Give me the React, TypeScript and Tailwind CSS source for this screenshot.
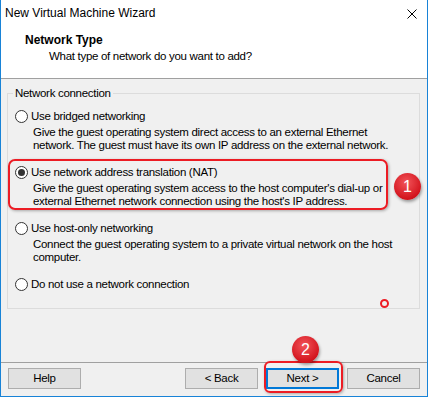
import React from 'react';

interface NetOption {
  id: string;
  label: string;
  desc: string[];
  checked?: boolean;
}

const options: NetOption[] = [
  {
    id: 'bridged',
    label: 'Use bridged networking',
    desc: [
      'Give the guest operating system direct access to an external Ethernet',
      'network. The guest must have its own IP address on the external network.',
    ],
  },
  {
    id: 'nat',
    label: 'Use network address translation (NAT)',
    desc: [
      "Give the guest operating system access to the host computer's dial-up or",
      "external Ethernet network connection using the host's IP address.",
    ],
    checked: true,
  },
  {
    id: 'host',
    label: 'Use host-only networking',
    desc: ['Connect the guest operating system to a private virtual network on the host', 'computer.'],
  },
  { id: 'none', label: 'Do not use a network connection', desc: [] },
];

// body text is a touch narrower than Arial, so squeeze it a little
const body = 'text-[11.5px] tracking-[-0.3px]';

const Radio: React.FC<{ checked?: boolean }> = ({ checked }) => (
  <span className="flex items-center justify-center w-[13px] h-[13px] rounded-full border border-[#333] bg-white shrink-0">
    {checked && <span className="w-[7px] h-[7px] rounded-full bg-[#333]" />}
  </span>
);

const Badge: React.FC<{ n: string; className: string }> = ({ n, className }) => (
  <div
    className={`absolute w-[27px] h-[27px] rounded-full flex items-center justify-center text-white text-[16px] leading-none bg-[radial-gradient(circle_at_45%_35%,#f2545a,#d3141d_70%,#b80f17)] shadow-[1px_2px_3px_rgba(0,0,0,0.35)] ${className}`}
  >
    {n}
  </div>
);

export default function App() {
  return (
    <div className="relative w-[428px] h-[397px] flex flex-col bg-[#f0f0f0] border-x border-b border-[#1883d7] text-[12px] leading-[13px] text-black font-['Liberation_Sans',Arial,sans-serif]">
      {/* title bar */}
      <div className="h-[27px] bg-white flex items-center justify-between pl-[4px] pr-[10px]">
        <span>New Virtual Machine Wizard</span>
        <svg width="10" height="10" viewBox="0 0 10 10" className="mt-[1px]">
          <path d="M0.5 0.5 L9.5 9.5 M9.5 0.5 L0.5 9.5" stroke="#000" strokeWidth="1" fill="none" />
        </svg>
      </div>

      {/* header */}
      <div className="h-[52px] bg-white border-b border-[#a0a0a0] pt-[7px]">
        <div className="pl-[24px] font-bold">Network Type</div>
        <div className={`pl-[48px] mt-[3px] ${body}`}>What type of network do you want to add?</div>
      </div>

      {/* body */}
      <div className={`flex-1 pl-[6px] pr-[7px] ${body}`}>
        <fieldset className="mt-[8px] border border-[#dcdcdc] pl-[7px] pt-[10px] pb-[17px]">
          <legend className="ml-[-2px] px-[2px]">Network connection</legend>
          <div className="flex flex-col gap-[14px]">
            {options.map((opt) => (
              <div key={opt.id}>
                <div className="flex items-center gap-[3px]">
                  <Radio checked={opt.checked} />
                  <span className="whitespace-nowrap">{opt.label}</span>
                </div>
                {opt.desc.length > 0 && (
                  <div className="pl-[18px] mt-[3px]">
                    {opt.desc.map((line) => (
                      <div key={line} className="whitespace-nowrap">
                        {line}
                      </div>
                    ))}
                  </div>
                )}
              </div>
            ))}
          </div>
        </fieldset>
      </div>

      {/* footer */}
      <div className={`h-[34px] border-t border-[#a0a0a0] flex items-start pt-[5px] pl-[7px] pr-[7px] ${body}`}>
        <button className="w-[73px] h-[21px] border border-[#adadad] bg-[#e1e1e1]">Help</button>
        <div className="ml-auto flex gap-[8px]">
          <button className="w-[73px] h-[21px] border border-[#adadad] bg-[#e1e1e1]">&lt; Back</button>
          <button className="w-[73px] h-[21px] border-2 border-[#0078d7] bg-[#e1e1e1]">Next &gt;</button>
          <button className="w-[73px] h-[21px] border border-[#adadad] bg-[#e1e1e1]">Cancel</button>
        </div>
      </div>

      {/* annotations */}
      <div className="absolute left-[7px] top-[159px] w-[380px] h-[51px] rounded-[7px] border-2 border-[#ec1c24] shadow-[1px_1px_3px_rgba(0,0,0,0.3)]" />
      <Badge n="1" className="left-[393px] top-[173px]" />
      <div className="absolute left-[263px] top-[361px] w-[79px] h-[32px] rounded-[6px] border-2 border-[#ec1c24] shadow-[1px_1px_3px_rgba(0,0,0,0.3)]" />
      <Badge n="2" className="left-[291px] top-[336px]" />
      <div className="absolute left-[379px] top-[299px] w-[9px] h-[9px] rounded-full border-2 border-[#ec1c24]" />
    </div>
  );
}
